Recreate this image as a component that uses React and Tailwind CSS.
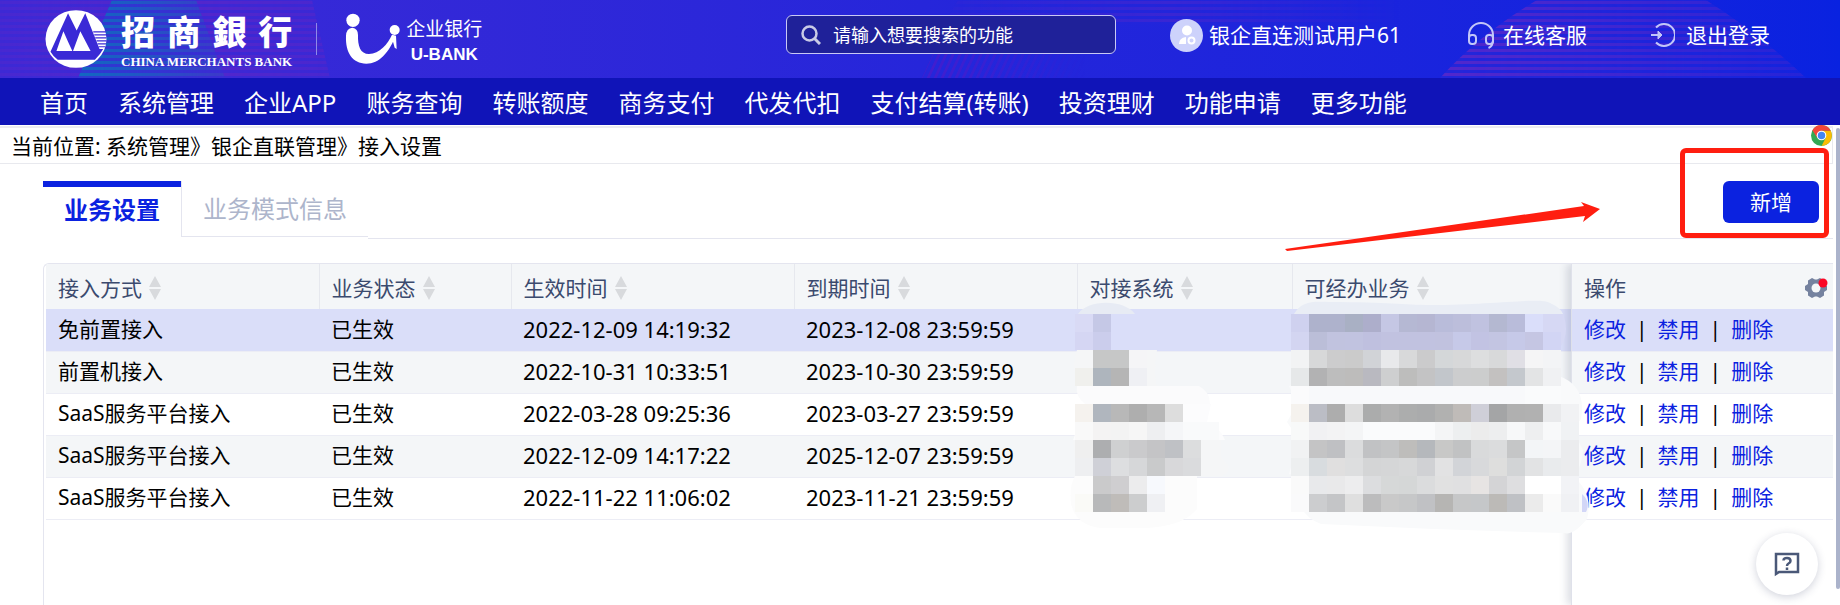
const NAV = ['首页', '系统管理', '企业APP', '账务查询', '转账额度', '商务支付', '代发代扣', '支付结算(转账)', '投资理财', '功能申请', '更多功能'];

const COLUMNS = ['接入方式', '业务状态', '生效时间', '到期时间', '对接系统', '可经办业务'];

const ROWS = [
  ['免前置接入', '已生效', '2022-12-09 14:19:32', '2023-12-08 23:59:59'],
  ['前置机接入', '已生效', '2022-10-31 10:33:51', '2023-10-30 23:59:59'],
  ['SaaS服务平台接入', '已生效', '2022-03-28 09:25:36', '2023-03-27 23:59:59'],
  ['SaaS服务平台接入', '已生效', '2022-12-09 14:17:22', '2025-12-07 23:59:59'],
  ['SaaS服务平台接入', '已生效', '2022-11-22 11:06:02', '2023-11-21 23:59:59'],
];

const ROW_BG = ['bg-[#dadef9]', 'bg-[#f4f6f8]', 'bg-white', 'bg-[#f4f6f8]', 'bg-white'];

/* Colours of the 18px blocks that mask the two private columns, row by row. */
const MASK_SYSTEM = [
  'd9daf5 c5c8e6',
  'd5d6f3 cbcdec',
  '- c6c7c7 c6c7c7 f5f5f7',
  'f0f0ed aeb5bd b5b5b5 eff0f4',
  '-',
  'f5f2ee b0b6be b8b8b8 aeaeae b7b7b7 dddddd',
  'f9f9f9 f4f3f3 f3f3f3 f6f6f6 eeeff1 f5f6f8 f9fafb f9fafb',
  'efefef adaeb0 cfd0d1 cacacc c4c4c6 bfc1c5 dcddde',
  'eeeff1 cfd0d7 dddee0 d6d7d9 c9cacb d8d8da dadbdd',
  '- cacacb cfced0 ececed f7f9fd',
  'fafaf7 b8b9ba bfbcb9 cccdce eff0f3',
];

const MASK_BUSINESS = [
  'cfd1ef aeb2cc aeb2cc a9b0c4 adaecb c5c7e4 b5b8d3 b5b6d2 b9bcda bcbedb c0c2e0 b4b8d1 b9bcda dadefa',
  'd3d5f1 bbbed8 c1c3df c1c3e0 bfc0df c1c2e0 c1c2e0 c1c2e0 c1c2df c6c9e8 c2c3e3 c3c5e2 c6c9e8 c5c6e3 d2d5f4',
  'f2f3f4 d7d8d9 cccccd cbcbcb d1d3d7 e8e9eb d8d9da cbcbcc d4d7d9 d7d8d9 dddedf d8d9da e0dfe5 f5f5f6 f3f4f6',
  'e6e8e9 b2b2b3 bdbdbd bdbcbb b9b9c0 cecfd0 bdbdbc c3c3c4 c2c6cb cccdce cccdcd c3c1c0 c4c8cd e3e4e5 f0f1f3',
  'fbfbfc f8f9fb f8f9fb f8f9fb f8f9fb f8f9fb f8f9fb f8f9fb f8f9fb f8f9fb f8f9fb f8f9fb f8f9fb fafbfc fafbfc',
  'f5f2ee bbbdc5 adadad dddddd abacac b2b2b2 acadad aaabac b1b1b0 bfbbb8 cfcfd8 a4a5a6 b0b0b0 b1b1b1 e9eaec f1f2f4',
  'f8f9f9 f1f1f3 f3f3f4 f4f5f6 fafbfc fafbfc fafbfc fafbfc f4f5f6 edeff0 ececec edeeef f7f8f9 eeeff0 f8f9fa f0f2f4',
  'f1f2f3 c4c4c5 bfc0c3 dbdcdd c1c2c4 c4c5c6 bebdbb b5b8bc c8c8c7 c1c2c3 d9dadb dbdcdd c5c6c7 f3f5f7 f4f5f7 ebecee',
  'edeff0 d8dcdf e0dfdf dddedf d4d5d6 d5d6d7 d7d8d9 d0d1d4 e2e2e3 d2d4d8 d8d9db dededd d2d4d6 e2e3e4 e9ebed ebecee',
  'fafafa e8e9eb e9e9ea ededee dcdddf d6d8d8 d5d7d7 dbdcdd e1e1e1 e0e0e1 e7e4e3 d4d4d6 dedee0 ffffff ffffff f2f3f6',
  'fafafb cccdcf c4c5c7 dfdfdf bcbcbd c9c9c9 c6c7c8 c0c1c4 b6b5b3 c6c7c8 c5c7c9 bcbab7 bfc1c5 ebebeb fafafa f0f1f4',
];

function Mask({ rows, x }) {
  return rows.flatMap((row, r) =>
    row.split(' ').map((c, i) =>
      c === '-' ? null : <rect key={r + '-' + i} x={x + i * 18} y={r * 18} width="18" height="18" fill={'#' + c} />
    )
  );
}

function PrivacyMask() {
  return (
    <svg className="pointer-events-none absolute left-[1017px] top-[36px]" width="540" height="248" viewBox="0 -14 540 248" shapeRendering="crispEdges" aria-hidden="true">
      <g shapeRendering="auto">
        <path d="M17 0C27 -15 63 -15 74 0z" fill="#e7ebf4" />
        <path d="M233 0C240 -12 250 -13 268 -12C330 -12 340 -9 370 -9C430 -9 480 -17 489 -11Q500 -6 502 0z" fill="#e9edf5" />
        <path d="M233 0H502Q510 20 497 36H233z" fill="#d6d8f4" />
        <path d="M16 36H96Q92 60 96 72H16Q10 52 16 36z" fill="#f5f6f7" />
        <path d="M16 72H138Q149 78 149 90H24Q14 82 16 72z" fill="#fbfbfc" />
        <path d="M14 90H150L146 108Q158 112 164 126H12Q17 116 14 90z" fill="#fcfcfd" />
        <path d="M12 126H160V144Q176 156 160 162H16z" fill="#f5f6f7" />
        <path d="M14 162H136V195Q120 214 80 214H40Q16 212 10 190Q8 172 14 162z" fill="#fcfcfc" />
        <path d="M238 36H495Q490 50 498 62Q526 72 520 105Q510 116 522 136Q520 156 512 162Q533 180 526 205Q512 222 503 219Q380 216 260 210Q232 200 236 162L228 160L238 126L226 108L236 90L228 72L238 68Q230 54 238 36z" fill="#f9fafb" />
        <path d="M521 180Q530 188 525 198H521z" fill="#d2d6f7" />
      </g>
      <Mask rows={MASK_SYSTEM} x={14} />
      <Mask rows={MASK_BUSINESS} x={230} />
    </svg>
  );
}

function HeaderArt() {
  return (
    <>
      <svg className="absolute left-0 top-0" width="340" height="78" viewBox="0 0 340 78" aria-hidden="true">
        <defs>
          <pattern id="purpleL" width="8" height="6" patternUnits="userSpaceOnUse"><rect width="8" height="6" fill="#4028d3" /><rect y="1" width="8" height="3" fill="#5c26c8" /></pattern>
          <pattern id="tealL" width="8" height="6" patternUnits="userSpaceOnUse"><rect y="1" width="8" height="3" fill="#1368c0" /></pattern>
          <linearGradient id="fadeL"><stop offset="0" stopColor="#fff" stopOpacity=".35" /><stop offset=".5" stopColor="#fff" stopOpacity=".8" /><stop offset="1" stopColor="#fff" stopOpacity=".5" /></linearGradient>
          <linearGradient id="fadeT"><stop offset="0" stopColor="#fff" /><stop offset="1" stopColor="#fff" stopOpacity=".2" /></linearGradient>
          <mask id="mL"><rect width="340" height="78" fill="url(#fadeL)" /></mask>
          <mask id="mT"><rect x="78" width="150" height="78" fill="url(#fadeT)" /></mask>
        </defs>
        <path d="M0 0H312L330 78H0z" fill="url(#purpleL)" mask="url(#mL)" />
        <path d="M112 0H196L225 78H78z" fill="#2a3fd0" opacity=".8" mask="url(#mT)" />
        <path d="M112 0H196L225 78H78z" fill="url(#tealL)" mask="url(#mT)" />
      </svg>
      <svg className="absolute right-0 top-0" width="940" height="78" viewBox="0 0 940 78" aria-hidden="true">
        <defs>
          <pattern id="purpleR" width="8" height="6" patternUnits="userSpaceOnUse"><rect width="8" height="6" fill="#2426da" /><rect y="1" width="8" height="3" fill="#5328cb" /></pattern>
          <pattern id="diag" width="7" height="8" patternUnits="userSpaceOnUse" patternTransform="skewX(-25)"><rect width="3" height="8" fill="#4a1ccb" /></pattern>
          <linearGradient id="fadeR"><stop offset="0" stopColor="#fff" /><stop offset="1" stopColor="#fff" stopOpacity=".35" /></linearGradient>
          <linearGradient id="fadeD"><stop offset="0" stopColor="#fff" stopOpacity=".8" /><stop offset="1" stopColor="#fff" stopOpacity="0" /></linearGradient>
          <linearGradient id="fadeM"><stop offset="0" stopColor="#fff" stopOpacity=".1" /><stop offset=".5" stopColor="#fff" stopOpacity=".5" /><stop offset="1" stopColor="#fff" stopOpacity="0" /></linearGradient>
          <mask id="mR"><rect x="540" width="370" height="78" fill="url(#fadeR)" /></mask>
          <mask id="mD"><rect x="20" width="165" height="78" fill="url(#fadeD)" /></mask>
          <mask id="mM"><rect x="40" width="460" height="78" fill="url(#fadeM)" /></mask>
        </defs>
        <path d="M637 0H806Q860 34 906 78H540Q580 34 637 0z" fill="url(#purpleR)" mask="url(#mR)" />
        <path d="M58 0H500V24H44z" fill="url(#purpleR)" mask="url(#mM)" />
        <path d="M35 50H185V78H22z" fill="url(#diag)" mask="url(#mD)" />
      </svg>
    </>
  );
}

function CmbMark() {
  return (
    <svg width="62" height="58" viewBox="134 26 186 175" aria-hidden="true">
      <ellipse cx="227" cy="113.500" rx="92" ry="87" fill="#fff" />
      <path d="M203 36L150 152Q158 166 172 176H284Q301 160 309 144H298L255 36L229 88z" fill="#3a2ad6" />
      <path d="M189 90L168 150H216L203 122zM240 90L218 150H271z" fill="#fff" />
      <path d="M279 92H318M282 101H319M285 110H319M289 119H319M292 128H318M295 137H315" stroke="#3a2ad6" strokeWidth="3.500" />
    </svg>
  );
}

function UMark() {
  return (
    <svg width="56" height="52" viewBox="46 36 168 156" fill="#fff" aria-hidden="true">
      <circle cx="70" cy="58" r="20" />
      <circle cx="195" cy="87" r="15" />
      <path d="M49 104Q50 82 68 80Q85 82 85 102C84 135 92 159 118 159C150 157 174 130 187 101L199 104L201 144L195 140L190 122C176 152 150 188 110 188C68 186 47 156 49 104z" />
    </svg>
  );
}

function SortIcon() {
  return (
    <svg width="12" height="24" viewBox="0 0 12 24" fill="#d8dadd" aria-hidden="true">
      <path d="M6 0L12 11H0zM6 24L12 13H0z" />
    </svg>
  );
}

function ChromeIcon() {
  return (
    <svg className="absolute -top-[3px] right-0" width="21" height="21" viewBox="0 0 48 48" aria-hidden="true">
      <circle cx="24" cy="24" r="24" fill="#34a853" />
      <path d="M45 13A24 24 0 0 1 24 48L33.500 29.500L24 13z" fill="#fbbc05" />
      <path d="M3.200 12L14.500 29.500L24 13H45.200A24 24 0 0 0 3.200 12z" fill="#f4473a" />
      <circle cx="24" cy="24" r="11" fill="#fff" />
      <circle cx="24" cy="24" r="8.500" fill="#4285f4" />
    </svg>
  );
}

export default function App() {
  return (
    <div className="relative flex h-screen flex-col overflow-hidden bg-white font-['Noto_Sans','Noto_Sans_CJK_SC',sans-serif] text-[21px] leading-7 text-black">
      <header className="relative flex h-[78px] shrink-0 items-center bg-linear-to-r from-[#3c2ad6] via-[#2626da] to-[#0922e0] pl-[45px] pr-[70px] text-white">
        <HeaderArt />
        <div className="relative flex items-center">
          <CmbMark />
          <div className="ml-[14px] flex flex-col">
            <div className="flex justify-between font-['Noto_Sans_CJK_TC',sans-serif] text-[34px] font-black leading-[50px]">
              <span>招</span><span>商</span><span>銀</span><span>行</span>
            </div>
            <div className="whitespace-nowrap pb-1 font-['Liberation_Serif',serif] text-[13px] font-bold leading-3">CHINA MERCHANTS BANK</div>
          </div>
          <div className="ml-6 h-8 w-px bg-[#8f8ae8]" />
          <div className="ml-7"><UMark /></div>
          <div className="ml-[5px] flex flex-col items-center pt-1">
            <div className="text-[19px] leading-7">企业银行</div>
            <div className="font-['Liberation_Sans',sans-serif] text-[17px] font-bold leading-6">U-BANK</div>
          </div>
        </div>

        <div className="relative mb-[9px] ml-auto flex h-[39px] w-[330px] items-center rounded-md border border-[#c9c9f5] bg-[#1f2199] pl-[14px]">
          <svg className="shrink-0" width="20" height="20" viewBox="0 0 20 20" fill="none" stroke="#c9cbe6" strokeWidth="2.500" aria-hidden="true">
            <circle cx="8.500" cy="8.500" r="7" />
            <path d="M13.500 13.500L19 19" strokeWidth="3" />
          </svg>
          <input type="text" aria-label="请输入想要搜索的功能" placeholder="请输入想要搜索的功能" className="ml-3 h-full min-w-0 flex-1 bg-transparent text-[18px] text-white outline-none placeholder:text-white placeholder:opacity-100" />
        </div>

        <a href="#user" className="relative mb-2 ml-[54px] flex items-center gap-[6px] whitespace-nowrap">
          <svg width="33" height="33" viewBox="0 0 33 33" aria-hidden="true">
            <circle cx="16.500" cy="16.500" r="16.500" fill="#cdd2fb" />
            <circle cx="17" cy="11.500" r="5" fill="#fff" />
            <path d="M9 25Q9 19 16 18V25z" fill="#fff" />
            <circle cx="21.500" cy="21.500" r="3" fill="none" stroke="#fff" strokeWidth="2" />
          </svg>
          银企直连测试用户61
        </a>
        <a href="#service" className="relative mb-2 ml-[66px] flex items-center gap-2 whitespace-nowrap">
          <svg width="28" height="28" viewBox="0 0 28 28" fill="none" stroke="#c3c6f8" strokeWidth="2" aria-hidden="true">
            <path d="M2 19V14A12 12 0 0 1 26 14V19Q26 25 21.500 27" />
            <rect x="2" y="14" width="7" height="9" rx="3" />
            <rect x="19" y="14" width="7" height="9" rx="3" />
          </svg>
          在线客服
        </a>
        <a href="#logout" className="relative mb-2 ml-[64px] flex items-center gap-[11px] whitespace-nowrap">
          <svg width="24" height="24" viewBox="0 0 24 24" fill="none" stroke="#c3c6f8" strokeWidth="2" aria-hidden="true">
            <path d="M5 4.500A11 11 0 1 1 5 19.500" />
            <path d="M0 12H10" />
            <path d="M7 8L11 12L7 16z" fill="#c3c6f8" strokeWidth="1" />
          </svg>
          退出登录
        </a>
      </header>

      <nav className="flex h-[47px] shrink-0 items-center gap-[30px] whitespace-nowrap bg-[#1014b8] px-10 pt-[3px] text-[24px] text-white">
        {NAV.map((n) => <a key={n} href="#nav">{n}</a>)}
      </nav>

      <div className="relative mr-[7px] mt-px shrink-0 border-b border-r border-[#e8e9ee] border-t-2 border-t-[#ececf1] pb-[3px] pl-[11px] pt-[4px]">
        当前位置: 系统管理》银企直联管理》接入设置
        <ChromeIcon />
      </div>

      <main className="ml-[43px] mr-[7px] flex flex-1 flex-col pt-[17px]">
        <div className="flex shrink-0 items-start text-[24px]" role="tablist">
          <button role="tab" aria-selected="true" className="h-[56px] border-t-[6px] border-[#0b22e0] px-[21px] pb-1 font-bold text-[#0b22e0]">业务设置</button>
          <button role="tab" aria-selected="false" className="h-[56px] border-b border-l border-[#e4e5ef] px-[21px] text-[#adb5cb]">业务模式信息</button>
          <div className="flex h-[58px] flex-1 justify-end border-b border-[#e4e5ef] pr-[14px] text-[21px]">
            <div className="relative h-[42px]">
              <button className="h-full w-24 rounded-md bg-[#0b22e0] text-white">新增</button>
              <div className="pointer-events-none absolute -bottom-[15px] -left-[43px] -right-[10px] -top-[33px] rounded-md border-[5px] border-[#ff1e10]" />
              <svg className="pointer-events-none absolute -left-[438px] top-[21px]" width="315" height="50" viewBox="0 0 315 50" fill="#ff1e10" aria-hidden="true">
                <path d="M0 47L299 4L296 0L315 7L298 20L300 14L2 49z" />
              </svg>
            </div>
          </div>
        </div>

        <section className="relative mt-6 flex-1 overflow-hidden rounded-tl-md border-l border-t border-[#e4e5ef] pl-[2px]">
          <table className="w-full table-fixed border-collapse text-left">
            <colgroup>
              <col className="w-[273px]" />
              <col className="w-[192px]" />
              <col className="w-[283px]" />
              <col className="w-[283px]" />
              <col className="w-[215px]" />
              <col />
              <col className="w-[261px]" />
            </colgroup>
            <thead>
              <tr className="h-[45px] bg-[#f4f6f8] text-[#3b4a6e]">
                {COLUMNS.map((c, i) => (
                  <th key={c} className={i < 5 ? 'border-r border-[#e6e8ee] pl-3 pt-[2px] font-normal' : 'pl-3 pt-[2px] font-normal'}>
                    <span className="flex items-center gap-[7px]">{c}<SortIcon /></span>
                  </th>
                ))}
                <th className="pl-3 pr-[5px] pt-[2px] font-normal">
                  <span className="flex items-center justify-between">
                    操作
                    <button aria-label="列设置">
                      <svg width="23" height="22" viewBox="0 0 23 22" aria-hidden="true">
                        <path d="M7 1L10 2.500H12L15 1L19 3.500V7L22 9V13L19 15V18.500L15 21L12 19.500H10L7 21L3 18.500V15L0 13V9L3 7V3.500z" fill="#75829f" />
                        <circle cx="11" cy="11" r="4.500" fill="#f4f6f8" />
                        <circle cx="18" cy="6" r="4.500" fill="#fb0725" />
                      </svg>
                    </button>
                  </span>
                </th>
              </tr>
            </thead>
            <tbody>
              {ROWS.map((row, i) => (
                <tr key={i} className={`h-[42px] border-b border-[#ecedf5] ${ROW_BG[i]}`}>
                  {row.map((cell, j) => (
                    <td key={j} className={j > 1 ? 'whitespace-nowrap pb-[2px] pl-3 text-[22px]' : 'whitespace-nowrap pb-[2px] pl-3'}>{cell}</td>
                  ))}
                  <td />
                  <td />
                  <td className="whitespace-nowrap pb-[2px] pl-3 text-[#0b22e0]">
                    <a href="#edit">修改</a>
                    <span className="mx-[10px] text-black">|</span>
                    <a href="#disable">禁用</a>
                    <span className="mx-[10px] text-black">|</span>
                    <a href="#delete">删除</a>
                  </td>
                </tr>
              ))}
            </tbody>
          </table>
          <div className="pointer-events-none absolute inset-y-0 right-0 w-[262px] border-l border-[#dfe1ea] shadow-[-4px_0_8px_rgba(40,50,90,0.16)]" />
          <PrivacyMask />
        </section>
      </main>

      <div className="absolute right-0 top-[128px] h-[461px] w-1 rounded bg-[#abb3cb]" />
      <button aria-label="帮助" className="absolute bottom-[10px] right-[22px] flex size-[62px] items-center justify-center rounded-full bg-white shadow-[0_2px_8px_rgba(40,50,90,0.22)]">
        <svg width="26" height="25" viewBox="0 0 26 25" fill="none" stroke="#4a5878" strokeWidth="2.500" aria-hidden="true">
          <path d="M2 22V2H24V20H5z" strokeLinejoin="miter" />
          <path d="M9.500 8.500Q9.500 6 13 6T16.500 9Q16.500 10.500 14.500 11.500Q13 12.300 13 14M13 15.500V18" />
        </svg>
      </button>
    </div>
  );
}
